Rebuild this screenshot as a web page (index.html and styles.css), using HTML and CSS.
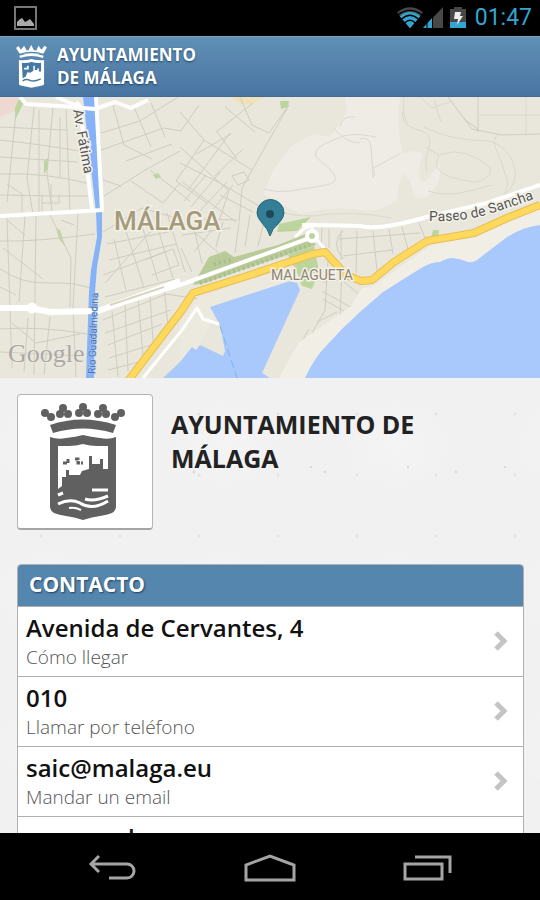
FILE: index.html
```
<!DOCTYPE html>
<html lang="es">
<head>
    <meta charset="UTF-8">
    <meta name="viewport" content="width=device-width, initial-scale=1.0">
    <title>Ayuntamiento de Málaga</title>
    <link rel="stylesheet" href="styles.css">
</head>
<body>
    <div class="status-bar">
        <svg class="status-picture" width="24" height="24" viewBox="0 0 24 24">
            <rect x="2" y="1" width="21" height="22" fill="none" stroke="#777" stroke-width="2"/>
            <path d="M4 20v-4l3-3 2-1 3 4 2-1 3-2 4 5v2z" fill="#aaa"/>
        </svg>
        <div class="status-icons">
            <svg width="26" height="24" viewBox="0 0 28 24">
                <path d="M0 6Q14-5 28 6L14 23z" fill="#484848"/>
                <path d="M3 10Q14 1 25 10L14 23z" fill="#33a5d0"/>
                <path d="M1 8.500Q14-1 27 8.500M5 13Q14 5 23 13M8.500 17Q14 12 19.500 17" fill="none" stroke="#000" stroke-width="1.500"/>
            </svg>
            <svg class="signal" width="20" height="24" viewBox="0 0 20 24">
                <path d="M0 22L20 1v21z" fill="#484848"/>
                <path d="M0 22L9 12v10z" fill="#33a5d0"/>
                <path d="M4 15v8M9.500 8v15" stroke="#000"/>
            </svg>
            <svg class="battery" width="16" height="24" viewBox="0 0 16 24">
                <path d="M0 3h4V1h8v2h4v19H0z" fill="#484848"/>
                <path d="M0 16h16v6H0z" fill="#33a5d0"/>
                <path d="M5 6h6l-1 4h3l-6 9 1-6H4z" fill="#eee"/>
            </svg>
            <span class="clock">01:47</span>
        </div>
    </div>

    <header class="top-bar">
        <svg class="top-logo" viewBox="0 0 84 118">
            <g fill="#fff">
                <path d="M0 10l7-5 6 10 9-11 7 13 5-1 7-14 8 14 6 1 6-13 8 11 8-11 7 5-10 17H10z"/>
                <path d="M9 31q33-12 66 0l-2 6q-31-10-62 0z"/>
                <path d="M8 43q17 2 34-3 17 5 34 3v64q0 4-5 5l-29 6-29-6q-5-1-5-5z"/>
            </g>
            <path d="M10 28q32-12 64 0" fill="none" stroke="#5284ad" stroke-width="3"/>
            <path d="M16 50q13 2 26-2 13 4 26 2v24h-6v-9h-4v5h-7V58h-4v14l-8 5-8-1-5 12-8 4z" fill="#4579a3"/>
            <path d="M18 99q10-6 20-1t29-4" fill="none" stroke="#4579a3" stroke-width="4"/>
            <path d="M22 66h10v-8" fill="none" stroke="#fff" stroke-width="5"/>
        </svg>
        <span class="top-name">AYUNTAMIENTO<br>DE MÁLAGA</span>
    </header>

    <main class="content">
        <svg class="map" viewBox="0 0 540 281" preserveAspectRatio="xMidYMid slice" role="img" aria-label="Mapa de Málaga">
            <rect width="540" height="281" fill="#e9e6db"/>
            <path d="M0 0h22l-8 14L0 20z" fill="#edd9d2"/>
            <path d="M230 0h35l-15 8-10-2z" fill="#f0e1b8"/>
            <path d="M263 97l10-24 17-23 23-13 17 3 17-25L345 0h55q-4 30 3 57 12-6 20 0-6 14-3 26 5 4 10-4t10-12q2 22-13 33-8 4-14-3-2-16-10-20-6 12-6 26-18 14-37 10-30-4-60 4z" fill="#efece5"/>

            <!-- parks -->
            <g fill="#bcd59c">
                <path d="M20 0l4 5-9 18 0-12zM44 64l4-3v10l-4 6zM56 131l4 2 5 16-6-7zM153 78l5-2 3 4-5 2zM280 4h9l-1 6-7 2z"/>
                <path d="M277 135l2-8 32-7-14 14zM288 158l26-9 5 25-7 18-10-3-6-16zM433 133h6l-1 8h-7zM465 140h10l-1 5h-8z"/>
            </g>
            <path d="M193 188l16-28 16-6 9 6 44-12 30-12 8 12-71 24-40 14z" fill="#b9cb98"/>
            <path d="M200 186l110-38M214 167l18-4" fill="none" stroke="#a9bd8a" stroke-width="4" stroke-dasharray="2 3"/>

            <!-- side streets -->
            <g class="streets">
                <path d="M0 43q37 4 80 11M0 77q45-2 90 10M0 98l54 1h35M0 144q35 1 95-7M0 30l66 3M0 60l78 5M0 172q22 15 48 14t42 5M0 232q40-3 87 5M0 255l84 4"/>
                <path d="M34 10l-7 72 6 35M53 10l-6 66 5 38M66 10l4 104M16 15l-9 90M39 13v106M7 121l5 150M25 119l-6 86M36 118l-2 160M50 118l21 43-1 49M78 117l-5 93 3 70M60 20v60"/>
                <path d="M42 97v9h17v-9M42 106v13M51 87v18M7 87l15 10v18M61 123l13 5M7 123l18 15M3 151l40 31M0 190l16 8M12 226l24 20 44-9M28 221l-4 54M50 220l-6 58"/>
                <path d="M101 36l39-12 38-24M101 53l63-22 17 3M112 5l12 43 28 14M134 10l17 40M151 6l14 34M126 64l46-17M104 99l43-27 33-18M103 83l18 6M131 84l32 22 17-20M150 73l40 31"/>
                <path d="M180 15l24 28-28 41 31 22M180 50l49 44-10 30M204 43l48 30M240 0l12 28 17 8 20-28-47 83-3 34M253 6l-37 29M199 8l-18 26M217 35l20 27M225 10l30 25M196 57l35-20M215 79l28-27"/>
                <path d="M180 66l40 20 39 23M184 104l22-26M191 110l29-35M198 116l29-31M206 121l27-33M182 85l54 40M188 93l42-57M232 79l12-4 5 8-11 5zM220 98l33 17"/>
                <path d="M103 135l39-24 34 10M107 147l66-13M109 163l67-16M105 186l45-51 27-7M114 142l12 51M126 134l18 57M141 125l17 59M154 119l19 62M167 116l18 59M145 163l28-11 6 16-27 10M103 178l64-24"/>
                <path d="M181 151l11 24M194 131l8 36M212 133l-18 22M223 125l-7 25M239 126l-4 30M250 118l-5 31M265 121l-7 28M182 138l49-7M200 122l37 1M179 122l42 36"/>
                <path d="M103 223l63-26 32 5M105 236l66-23M108 248l54-21M109 261l42-13M108 273l31-8M112 214l6 66M125 207l3 67M138 201l5 58M150 199l3 45M164 191l4 38M105 200l70-18"/>
                <path d="M322 131l-1 22M329 132v19M341 134v29M357 134l-1 42M373 134l4 40M389 132l4 25M402 130l6 22M419 126l6 15M339 142l81-6M343 159l49-6M343 133q-13 14 0 29"/>
                <path d="M342 171l-2 53-21 22-18 35M328 164l-3 49-32 57M322 194l32 18M323 202l26 15M343 184l18 15M322 185l30-3M313 243l13-2M317 225l20-10M300 253l12 7M309 232l-20 34"/>
                <path d="M448 0l24 32 30 6 38-1M478 0v35M464 22l14 10"/>
            </g>

            <!-- hill paths -->
            <g class="hills">
                <path d="M404 0q-2 16 3 26M420 0l12 11 20-7M434 3l7 22M497 38q-5 6-1 14t12 34l-4 13M526 0v40M478 18h62"/>
                <path d="M360 42q10-3 11 8t2 30q3-2 0-9 12-6 28-15M333 30q12 16 27 16M264 92q12 4 26 2t36-6-8-26q-10-10 18-20 14-8 40-2M340 30q2-12 15-10"/>
                <path d="M404 10q-6 18 12 22t13 19-2 24M424 30q26 14 66 14 18 6 24 24t-12 32M441 57q24-8 50 14-2 14-18 14-28-4-34-12t2-16zM428 94q12 4 24 3t40-9M425 50l14 8M281 115q12 4 32 4 40-6 78 2"/>
            </g>

            <!-- shore -->
            <path d="M350 210l12-19 11-2 31-22 31-21 34-5 31-12 40-17v20L477 170l-39 0-52 27-56 60-18 24h-33l20-36z" fill="#f1eee5"/>
            <path d="M180 225l18-24 45-16 49-15 8 11-80 30-40 70z" fill="#eceade"/>

            <!-- water -->
            <g fill="#a9c9fd">
                <path d="M83 0h14l5 115v25l-5 30-2 25-1 86h-8l3-86 2-22 6-33-1-25z" fill="#86b3f8"/>
                <path d="M163 281l17-16 12-15 4 3 4-5 23 11 2-5-5-26-10-18 80-26 7 2 3 7-38 83 8 5z"/>
                <path d="M305 281q9-20 22-33 15-17 33-33l23-20q22-14 40-25 9-5 17-5 7-4 13-4 8 1 15 4 4 1 9-2l30-23q16-10 33-12v153z"/>
            </g>
            <path d="M220 229l17 52" stroke="#79b5f5" stroke-dasharray="8 4"/>

            <!-- main roads -->
            <g class="roads">
                <path d="M20 0l6 7 34 2 35 3 20-7 16 6 17-8M56 0l24 10M96 0l6 114M76 5l4 4 12 104M0 119l103-6" stroke-width="4"/>
                <path d="M98 214l82-26 127-46M302 128q30 0 58 1 18 5 67-9l60-14 53-18" stroke-width="4"/>
                <path d="M0 211h30l20 4 48-1 82-30" stroke-width="6"/>
                <path d="M143 281l39-48 15-22 6 11 16 5M295 140l10-9 7-3v8M316 141l9 12" stroke-width="3"/>
                <path d="M110 208l54-18" stroke="#d9d5c0" stroke-width="2"/>
                <circle cx="32" cy="211" r="4" fill="#fff" stroke-width="3"/>
                <circle cx="312" cy="139" r="5" fill="#bcd59c" stroke-width="4"/>
            </g>
            <path class="avenue-edge" d="M128 284l54-71 11-17 54-17 66-22 12-2 21 23 15 6 11-1 22-18 33-21 24-4 23-4 33-15 33-13"/>
            <path class="avenue" d="M128 284l54-71 11-17 54-17 66-22 12-2 21 23 15 6 11-1 22-18 33-21 24-4 23-4 33-15 33-13"/>

            <g class="map-labels">
                <text class="city" x="114" y="133">MÁLAGA</text>
                <text class="district" x="271" y="183">MALAGUETA</text>
                <text class="street-name" transform="translate(73 13) rotate(80)">Av. Fátima</text>
                <path id="paseo" d="M429 124q34 1 60-7t50-17" fill="none"/>
                <text class="street-name"><textPath href="#paseo">Paseo de Sancha</textPath></text>
                <text class="river-name" transform="translate(95 277) rotate(-88)">Río Guadalmedina</text>
                <text class="google" x="8" y="265">Google</text>
            </g>

            <!-- pin -->
            <path d="M270 139q-2-7-8-13-5-6-5-10a13 13 0 0 1 27 0q0 5-6 11-6 5-8 12z" fill="#347f98" stroke="#286478"/>
            <circle cx="270" cy="117" r="4" fill="#1f4858"/>
        </svg>

        <section class="place">
            <div class="place-logo">
                <svg viewBox="0 0 84 118" width="84" height="118">
                    <g fill="#606060">
                        <circle cx="4" cy="10" r="4"/><circle cx="10" cy="14" r="4"/><circle cx="80" cy="10" r="4"/><circle cx="74" cy="14" r="4"/>
                        <circle cx="22" cy="5" r="4"/><circle cx="19" cy="11" r="4"/><circle cx="27" cy="11" r="4"/>
                        <circle cx="42" cy="4" r="4"/><circle cx="38" cy="10" r="4"/><circle cx="46" cy="10" r="4"/>
                        <circle cx="62" cy="5" r="4"/><circle cx="57" cy="11" r="4"/><circle cx="65" cy="11" r="4"/>
                        <path d="M9 22q32-11 66 0l-3 8q-30-9-60 0z"/>
                        <path d="M9 34q8 3 16 1 10-1 17-3 8 2 17 3 9 2 16-1v69q0 5-4 7-5 2-12 3-8 1-17 4-9-3-17-4-7-1-12-3-4-2-4-7z"/>
                    </g>
                    <path d="M17 43h11q7 0 14-2 7 2 14 2h11v23h-5V56h-3v5h-8v-8h-3v13l-7 2-2 4H28v-5h-3v7h-4v9l-4 3z" fill="#fff"/>
                    <path d="M22 60h5v-5M34 56h3v4h5" fill="none" stroke="#606060" stroke-width="3" stroke-dasharray="4 1"/>
                    <path d="M17 101q12-6 22-1 12 8 28-2M44 96q9 3 23-3M51 87h16M17 92l5-2" fill="none" stroke="#fff" stroke-width="3"/>
                    <path d="M28 105q6-1 12 2" fill="none" stroke="#fff" stroke-width="2"/>
                </svg>
            </div>
            <h1>AYUNTAMIENTO DE MÁLAGA</h1>
        </section>

        <section class="contact">
            <h2>CONTACTO</h2>
            <a class="contact-row" href="#mapa">
                <span class="contact-text"><strong>Avenida de Cervantes, 4</strong><small>Cómo llegar</small></span>
                <svg class="arrow" viewBox="0 0 14 20"><path d="M2 2l8 8-8 8"/></svg>
            </a>
            <a class="contact-row" href="tel:010">
                <span class="contact-text"><strong>010</strong><small>Llamar por teléfono</small></span>
                <svg class="arrow" viewBox="0 0 14 20"><path d="M2 2l8 8-8 8"/></svg>
            </a>
            <a class="contact-row" href="mailto:saic@malaga.eu">
                <span class="contact-text"><strong>saic@malaga.eu</strong><small>Mandar un email</small></span>
                <svg class="arrow" viewBox="0 0 14 20"><path d="M2 2l8 8-8 8"/></svg>
            </a>
            <a class="contact-row last" href="#web">
                <span class="contact-text"><strong>www.malaga.eu</strong></span>
            </a>
        </section>
    </main>

    <nav class="nav-bar">
        <button aria-label="Atrás">
            <svg width="48" height="28" viewBox="0 0 48 28"><path d="M11 2l-8 8 8 8M3 10h36a7 7 0 0 1 0 14H21"/></svg>
        </button>
        <button aria-label="Inicio">
            <svg width="52" height="28" viewBox="0 0 52 28"><path d="M2 26V11l24-9 24 9v15z"/></svg>
        </button>
        <button aria-label="Recientes">
            <svg width="50" height="28" viewBox="0 0 50 28"><path d="M2 10h37v15H2zM12 3h35v16"/></svg>
        </button>
    </nav>
</body>
</html>
```
FILE: styles.css
```
* {
    box-sizing: border-box;
}

body {
    display: flex;
    flex-direction: column;
    height: 100vh;
    margin: 0;
    background: #000;
    font-family: 'Open Sans', sans-serif;
}

.status-bar {
    display: flex;
    flex: none;
    justify-content: space-between;
    align-items: center;
    height: 36px;
    padding: 0 8px 0 13px;
}

.status-icons {
    display: flex;
    align-items: center;
}

.battery {
    margin: 0 9px 0 7px;
}

.clock {
    color: #33a5d0;
    font-family: Roboto, sans-serif;
    font-size: 23px;
    line-height: 36px;
}

.top-bar {
    display: flex;
    flex: none;
    align-items: center;
    gap: 10px;
    height: 61px;
    padding: 0 16px 2px;
    border-top: 1px solid #75a5c4;
    border-bottom: 1px solid #416c98;
    background: linear-gradient(#6090b5, #4874a2);
}

.top-logo {
    width: 31px;
    height: 44px;
}

.top-name {
    color: #fff;
    font-size: 17px;
    font-weight: bold;
    line-height: 23px;
    text-shadow: 0 1px 2px #1f4260;
}

.content {
    flex: 1;
    min-height: 0;
    overflow-y: auto;
    scrollbar-width: none;
    background-color: #f1f1f1;
    background-image:
        radial-gradient(circle at 20px 31px, #d8d8d8 0 1px, transparent 1px),
        radial-gradient(circle at 63px 84px, #ddd 0 1px, transparent 2px),
        radial-gradient(circle at 41px 12px, #e3e3e3 0 1px, transparent 2px),
        radial-gradient(ellipse at 50px 50px, #f4f4f4, transparent 60px);
    background-size: 97px 113px, 131px 97px, 79px 61px, 173px 149px;
}

/* map */
.map {
    display: block;
    width: 100%;
    height: 281px;
}

.streets,
.hills {
    fill: none;
    stroke: #d0ccc0;
    stroke-width: 1;
}

.hills {
    stroke: #dbd8ce;
}

.roads {
    fill: none;
    stroke: #fff;
    stroke-linejoin: round;
}

.avenue-edge,
.avenue {
    fill: none;
    stroke: #e9bd55;
    stroke-width: 8;
    stroke-linejoin: round;
}

.avenue {
    stroke: #ffd95c;
    stroke-width: 6;
}

.map-labels text {
    font-family: Roboto, sans-serif;
    paint-order: stroke;
    stroke: #f3f1e8;
    stroke-width: 3px;
}

.map-labels .city {
    fill: #a59b7b;
    font-size: 26px;
    font-weight: 500;
}

.map-labels .district {
    fill: #8e8672;
    font-size: 14px;
}

.map-labels .street-name {
    fill: #555;
    font-size: 14px;
}

.map-labels .river-name {
    fill: #4a70ad;
    font-size: 10px;
    stroke: #a9c9fd;
    stroke-width: 1px;
}

.map-labels .google {
    fill: #aaa8a2;
    font-family: 'Liberation Serif', serif;
    font-size: 26px;
    stroke-width: 1px;
}

/* place */
.place {
    display: flex;
    gap: 18px;
    padding: 16px 17px 0;
}

.place-logo {
    display: flex;
    flex: none;
    justify-content: center;
    align-items: center;
    width: 136px;
    height: 136px;
    padding-right: 4px;
    border: 1px solid #b5b5b5;
    border-bottom: 2px solid #a5a5a5;
    border-radius: 4px;
    background: #fff;
}

.place h1 {
    max-width: 280px;
    margin: 13px 0 0;
    color: #222;
    font-size: 25px;
    font-weight: bold;
    line-height: 34px;
}

/* contact list */
.contact {
    margin: 34px 16px 16px 17px;
    border: 1px solid #b0b0b0;
    border-radius: 4px;
    background: #fff;
    overflow: hidden;
}

.contact h2 {
    margin: 0;
    padding: 0 11px 2px;
    background: #5586ae;
    color: #fff;
    font-size: 21px;
    font-weight: bold;
    line-height: 39px;
    text-shadow: 1px 1px 2px #1f4260;
}

.contact-row {
    display: flex;
    justify-content: space-between;
    align-items: center;
    height: 70px;
    padding: 0 15px 2px 8px;
    border-top: 1px solid #b0b0b0;
    color: #111;
    text-decoration: none;
}

.contact-row.last {
    align-items: flex-start;
    padding-top: 5px;
}

.contact-text strong,
.contact-text small {
    display: block;
}

.contact-text strong {
    font-size: 24px;
    font-weight: 600;
    line-height: 32px;
}

.contact-text small {
    color: #555;
    font-size: 19px;
    font-weight: 300;
    line-height: 26px;
}

.arrow {
    width: 14px;
    height: 20px;
    fill: none;
    stroke: #c4c4c4;
    stroke-width: 5;
}

/* navigation bar */
.nav-bar {
    display: flex;
    flex: none;
    justify-content: center;
    height: 67px;
    padding-top: 2px;
}

.nav-bar button {
    display: flex;
    justify-content: center;
    align-items: center;
    width: 158px;
    padding: 0;
    border: none;
    background: none;
    cursor: pointer;
}

.nav-bar svg {
    fill: none;
    stroke: #a5a5a5;
    stroke-width: 3;
}
```
